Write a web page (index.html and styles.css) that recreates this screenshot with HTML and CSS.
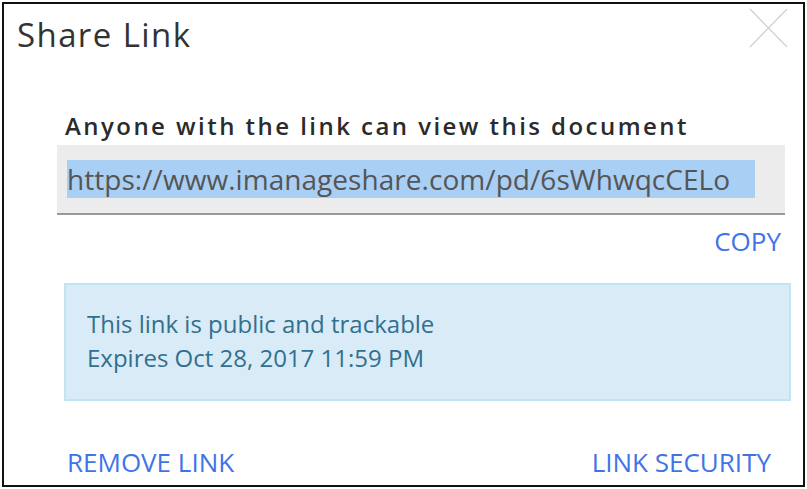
FILE: index.html
```html
<!DOCTYPE html>
<html lang="en">
<head>
    <meta charset="UTF-8">
    <title>Share Link</title>
    <link rel="stylesheet" href="styles.css">
</head>
<body>
    <div class="dialog">
        <div class="dialog-header">
            <h1 class="dialog-title">Share Link</h1>
            <svg class="close-icon" width="40" height="40" viewBox="0 0 40 40">
                <line x1="1" y1="1" x2="38" y2="39" stroke="#cfcfcf" stroke-width="1.3"/>
                <line x1="38" y1="1" x2="1" y2="39" stroke="#cfcfcf" stroke-width="1.3"/>
            </svg>
        </div>

        <div class="share-body">
            <h2 class="share-heading">Anyone with the link can view this document</h2>
            <div class="link-field">
                <span class="link-text">https://www.imanageshare.com/pd/6sWhwqcCELo</span>
            </div>
            <div class="copy-row">
                <a href="#" class="action-link">COPY</a>
            </div>
            <div class="info-box">
                <p>This link is public and trackable</p>
                <p>Expires Oct 28, 2017 11:59 PM</p>
            </div>
        </div>

        <div class="dialog-footer">
            <a href="#" class="action-link">REMOVE LINK</a>
            <a href="#" class="action-link">LINK SECURITY</a>
        </div>
    </div>
</body>
</html>
```

FILE: styles.css
```css
:root {
    --text-dark: #333333;
    --link-blue: #3f74e6;
    --field-bg: #ececec;
    --select-bg: #a9cff5;
    --info-bg: #d9ebf6;
    --info-border: #bfe5f1;
    --info-text: #31708f;
}

body {
    margin: 0;
    background: #ffffff;
    font-family: 'Open Sans', 'Noto Sans', sans-serif;
    color: var(--text-dark);
}

.dialog {
    box-sizing: border-box;
    width: 803px;
    height: 485px;
    margin: 2px;
    border: 2px solid #111111;
    display: flex;
    flex-direction: column;
}

.dialog-header {
    display: flex;
    justify-content: space-between;
    align-items: flex-start;
    padding: 0 14px 0 13px;
}

.dialog-title {
    margin: 10px 0 0;
    font-size: 33px;
    font-weight: 400;
    line-height: 42px;
    letter-spacing: 1.4px;
    color: #333333;
}

.close-icon {
    margin-top: 4px;
}

.share-body {
    padding: 52px 18px 0 53px;
}

.share-heading {
    margin: 0 0 0 8px;
    font-size: 24px;
    font-weight: 600;
    line-height: 36px;
    letter-spacing: 2.45px;
    color: #2b2b2b;
    white-space: nowrap;
}

.link-field {
    height: 68px;
    margin-top: 1px;
    background: var(--field-bg);
    border-bottom: 2px solid #999999;
    display: flex;
    align-items: center;
    padding-left: 10px;
}

.link-text {
    background: var(--select-bg);
    color: #555555;
    font-size: 28px;
    line-height: 38px;
    letter-spacing: 0.05px;
    padding-right: 25px;
}

.copy-row {
    display: flex;
    justify-content: flex-end;
    padding: 9px 4px 0 0;
}

.action-link {
    color: var(--link-blue);
    text-decoration: none;
    font-size: 26px;
    line-height: 34px;
}

.info-box {
    margin: 25px -6px 0 7px;
    padding: 22px 21px 24px;
    background: var(--info-bg);
    border: 2px solid var(--info-border);
    color: var(--info-text);
    font-size: 24px;
}

.info-box p {
    margin: 0;
    line-height: 34px;
}

.dialog-footer {
    margin-top: auto;
    display: flex;
    justify-content: space-between;
    padding: 0 32px 6px 63px;
}
```
